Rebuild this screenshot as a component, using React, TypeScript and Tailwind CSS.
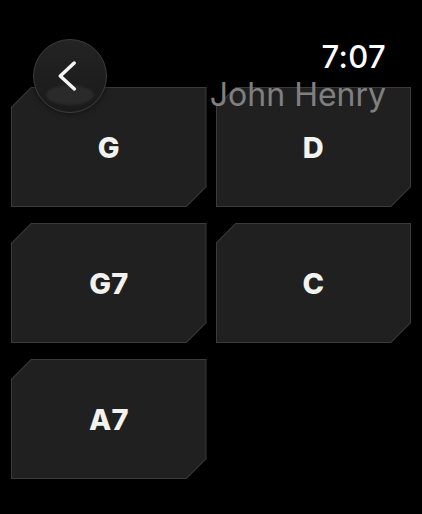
const chords = ['G', 'D', 'G7', 'C', 'A7']

function ChordCard({ name }: { name: string }) {
  return (
    <button className="h-[120px] bg-[#3b3b3b] p-px [clip-path:polygon(20px_0,100%_0,100%_calc(100%_-_20px),calc(100%_-_20px)_100%,0_100%,0_20px)]">
      <div className="flex h-full w-full items-center justify-center bg-[#202020] pt-[2px] [clip-path:polygon(19.4px_0,100%_0,100%_calc(100%_-_19.4px),calc(100%_-_19.4px)_100%,0_100%,0_19.4px)]">
        <span className="text-[29px] font-extrabold text-[#f2f2ee]">{name}</span>
      </div>
    </button>
  )
}

function BackButton() {
  return (
    <button className="absolute left-[33px] top-[39px] flex h-[74px] w-[74px] items-center justify-center overflow-hidden rounded-full border border-[#3c3c3c] bg-gradient-to-b from-[#232323] to-[#1a1a1a] shadow-[0_0_6px_rgba(0,0,0,0.6)]">
      <div className="absolute left-[12px] top-[45px] h-[20px] w-[48px] rounded-[50%] bg-[#2a2a2a] blur-[1px]" />
      <svg width="74" height="74" viewBox="0 0 74 74" className="relative">
        <path
          d="M41.3 23.7 L27 37 L41.5 50.3"
          fill="none"
          stroke="#f4f4f4"
          strokeWidth="3.6"
          strokeLinecap="round"
          strokeLinejoin="round"
        />
      </svg>
    </button>
  )
}

export default function App() {
  return (
    <div className="relative h-[514px] w-[422px] overflow-hidden bg-black font-['Inter',sans-serif]">
      <main className="grid grid-cols-2 gap-x-[9px] gap-y-4 px-[11px] pt-[87px]">
        {chords.map((c) => (
          <ChordCard key={c} name={c} />
        ))}
      </main>

      <header className="pointer-events-none absolute right-[36px] top-[38px] flex flex-col items-end">
        <span className="text-[31px] leading-[37px] font-medium tracking-[0.3px] text-white">7:07</span>
        <span className="mt-[1px] text-[32px] leading-[38px] font-normal text-[#808080]">John Henry</span>
      </header>

      <BackButton />
    </div>
  )
}
